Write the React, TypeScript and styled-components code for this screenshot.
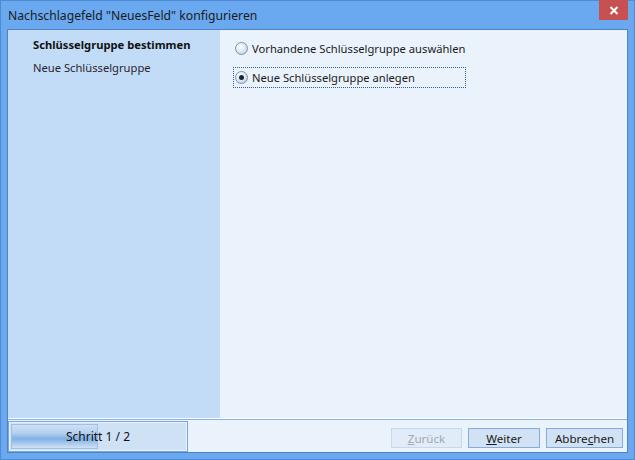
import React from 'react';
import styled, { createGlobalStyle } from 'styled-components';

const GlobalStyle = createGlobalStyle`
  html, body {
    margin: 0;
    padding: 0;
    background: #ffffff;
  }
  body {
    font-family: "Noto Sans", "Open Sans", Arial, sans-serif;
    font-size: 11.2px;
    color: #1b1b1b;
  }
`;

const Window = styled.div`
  width: 635px;
  height: 460px;
  box-sizing: border-box;
  border: 1px solid #4f8bd3;
  background: #6aa9f0;
  display: flex;
  flex-direction: column;
  padding: 0 6px 6px 6px;
`;

const TitleBar = styled.div`
  height: 28px;
  display: flex;
  align-items: flex-start;
  justify-content: space-between;
`;

const Caption = styled.div`
  padding: 6px 0 0 1px;
  font-size: 12.2px;
  color: #1a1a1a;
  white-space: nowrap;
`;

const CloseButton = styled.div`
  width: 29px;
  height: 20px;
  margin-top: -1px;
  background: #c75050;
  display: flex;
  align-items: center;
  justify-content: center;
`;

const Client = styled.div`
  flex: 1;
  display: flex;
  flex-direction: column;
  border: 1px solid #4f83c6;
  background: #eaf2fb;
  min-height: 0;
`;

const Body = styled.div`
  flex: 1;
  display: flex;
  min-height: 0;
`;

const Sidebar = styled.div`
  width: 212px;
  background: #c2dcf7;
  padding: 7px 0 0 25px;
  box-sizing: border-box;
  display: flex;
  flex-direction: column;
  gap: 7px;
`;

const StepLabel = styled.div<{ $active?: boolean }>`
  font-weight: ${p => (p.$active ? 700 : 400)};
  line-height: 16px;
  color: ${p => (p.$active ? '#111' : '#2a1f2e')};
`;

const Content = styled.div`
  flex: 1;
  padding: 8px 0 0 13px;
  display: flex;
  flex-direction: column;
  gap: 8px;
`;

const Option = styled.label<{ $focused?: boolean }>`
  width: 233px;
  height: 21px;
  box-sizing: border-box;
  display: flex;
  align-items: center;
  gap: 4px;
  padding-left: 1px;
  border: 1px dotted ${p => (p.$focused ? '#2d5f9c' : 'transparent')};
  color: #1a1a1a;
  white-space: nowrap;
`;

const Radio = styled.span<{ $checked?: boolean }>`
  width: 11px;
  height: 11px;
  border-radius: 50%;
  border: 1px solid #7f93ad;
  background: radial-gradient(circle at 40% 35%, #ffffff 0%, #dce8f5 50%, #a9bfd8 100%);
  position: relative;
  flex: none;
  &::after {
    content: '';
    display: ${p => (p.$checked ? 'block' : 'none')};
    position: absolute;
    left: 3px;
    top: 3px;
    width: 5px;
    height: 5px;
    border-radius: 50%;
    background: #1c2530;
  }
`;

const Footer = styled.div`
  height: 33px;
  flex: none;
  border-top: 1px solid #88b2e2;
  box-shadow: 0 -1px 0 #ffffff;
  display: flex;
  align-items: flex-start;
  padding-top: 1px;
  box-sizing: border-box;
`;

const Progress = styled.div`
  width: 180px;
  height: 31px;
  box-sizing: border-box;
  border: 1px solid #7aa6dc;
  box-shadow: inset 0 0 0 1px #e8f1fb;
  background: #cfe1f4;
  position: relative;
  display: flex;
  align-items: center;
  justify-content: center;
`;

const ProgressFill = styled.div`
  position: absolute;
  left: 2px;
  top: 2px;
  bottom: 2px;
  box-sizing: border-box;
  border: 1px solid #9fc0e8;
  background: linear-gradient(#cfe1f4 0%, #b4d0ef 35%, #7fb0e6 60%, #b4d0ef 85%, #cfe1f4 100%);
`;

const ProgressText = styled.span`
  position: relative;
  font-size: 12px;
  color: #111;
`;

const Buttons = styled.div`
  margin-left: auto;
  margin-right: 4px;
  margin-top: 7px;
  display: flex;
  gap: 6px;
`;

const Button = styled.button<{ $width: number }>`
  width: ${p => p.$width}px;
  height: 20px;
  box-sizing: border-box;
  border: 1px solid #86acdb;
  background: #d1e2f4;
  font-family: inherit;
  font-size: 11.6px;
  color: #1a1a1a;
  padding: 0;
  &:disabled {
    border-color: #c5d8ee;
    background: #e2ecf8;
    color: #a2a8b0;
  }
`;

const steps = ['Schlüsselgruppe bestimmen', 'Neue Schlüsselgruppe'];

export default function App() {
  const step = 1;
  const total = 2;

  return (
    <>
      <GlobalStyle />
      <Window>
        <TitleBar>
          <Caption>Nachschlagefeld "NeuesFeld" konfigurieren</Caption>
          <CloseButton>
            <svg width="10" height="9" viewBox="0 0 10 9">
              <path d="M1.5 1 L8.5 8 M8.5 1 L1.5 8" stroke="#fff" strokeWidth="2" />
            </svg>
          </CloseButton>
        </TitleBar>
        <Client>
          <Body>
            <Sidebar>
              {steps.map((s, i) => (
                <StepLabel key={s} $active={i === step - 1}>{s}</StepLabel>
              ))}
            </Sidebar>
            <Content>
              <Option>
                <Radio />
                Vorhandene Schlüsselgruppe auswählen
              </Option>
              <Option $focused>
                <Radio $checked />
                Neue Schlüsselgruppe anlegen
              </Option>
            </Content>
          </Body>
          <Footer>
            <Progress>
              <ProgressFill style={{ width: `${Math.round((174 * step) / total)}px` }} />
              <ProgressText>Schritt {step} / {total}</ProgressText>
            </Progress>
            <Buttons>
              <Button $width={71} disabled><u>Z</u>urück</Button>
              <Button $width={72}><u>W</u>eiter</Button>
              <Button $width={77}>Abbre<u>c</u>hen</Button>
            </Buttons>
          </Footer>
        </Client>
      </Window>
    </>
  );
}
